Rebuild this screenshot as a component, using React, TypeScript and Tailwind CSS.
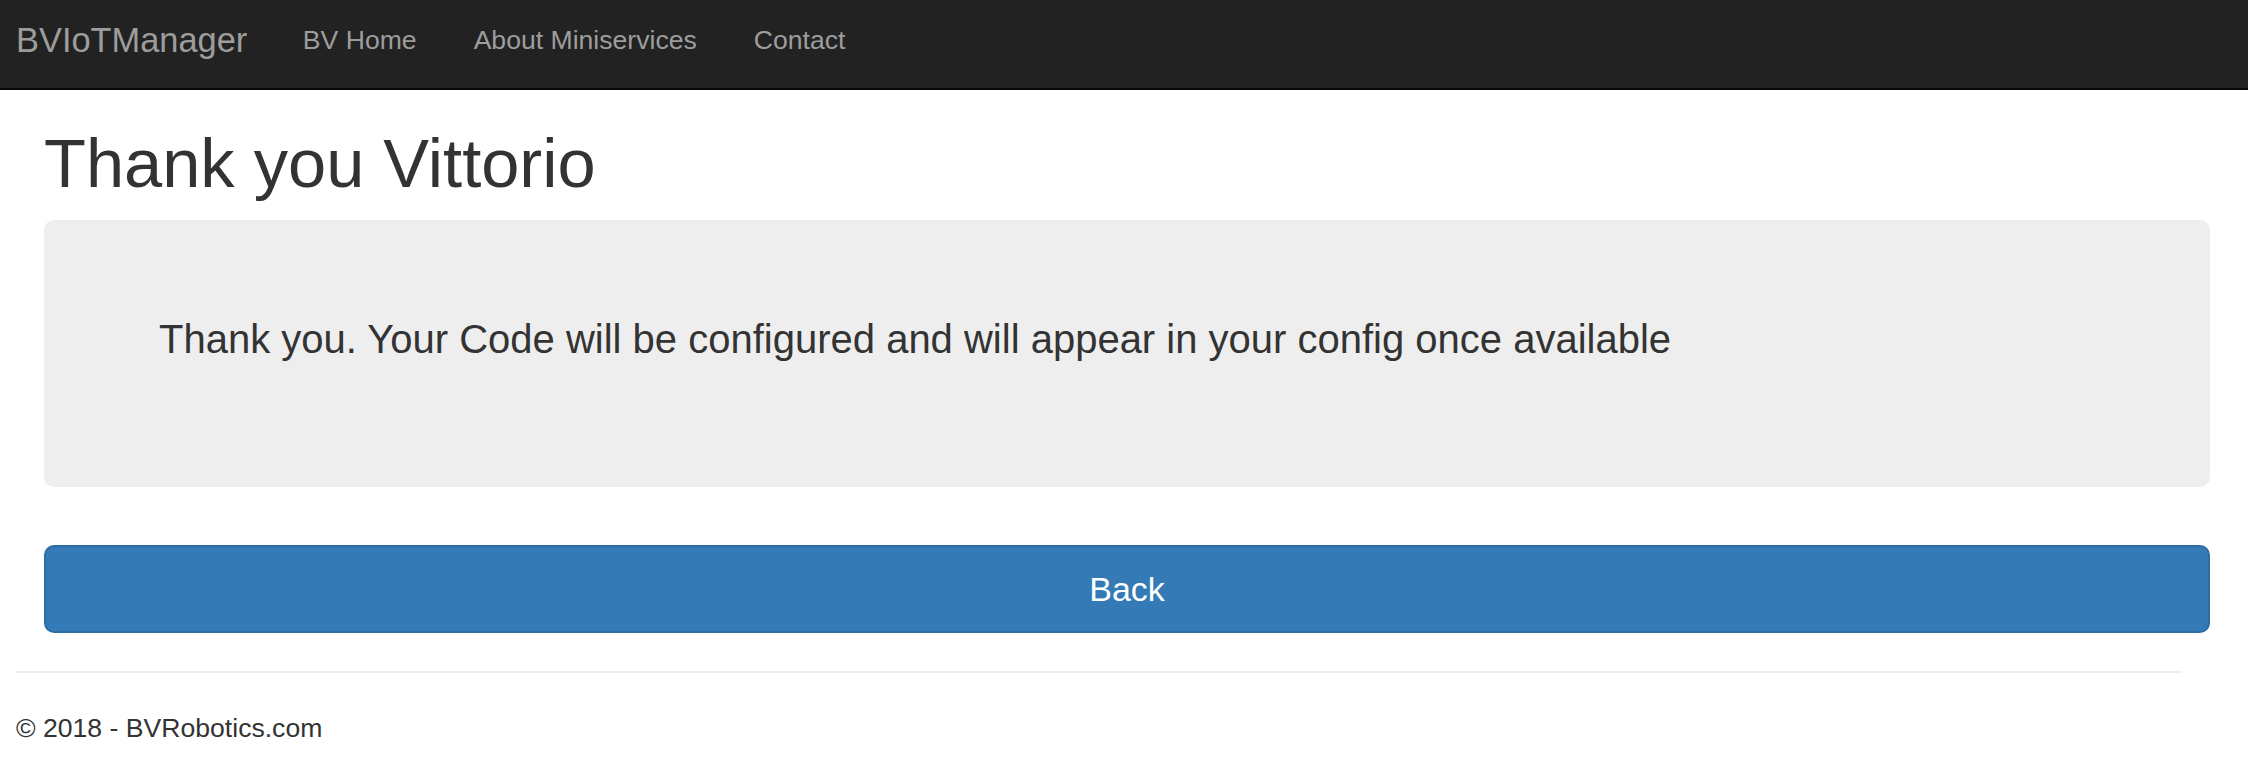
import React from "react";

export default function App() {
  return (
    <div className="min-h-screen bg-white font-['Liberation_Sans',Arial,sans-serif] text-[#333333]">
      <nav className="box-border flex h-[90px] items-start border-b-2 border-[#080808] bg-[#222222] pl-[16px] pt-[21px]">
        <a className="pr-[55.5px] text-[34.4px] leading-[38px] text-[#9d9d9d]">BVIoTManager</a>
        <ul className="flex gap-[57px]">
          <li className="text-[26.6px] leading-[38px] text-[#9d9d9d]">BV Home</li>
          <li className="text-[26.6px] leading-[38px] text-[#9d9d9d]">About Miniservices</li>
          <li className="text-[26.6px] leading-[38px] text-[#9d9d9d]">Contact</li>
        </ul>
      </nav>
      <div className="pl-[16px] pr-[66px]">
        <div className="ml-[28px] -mr-[28px]">
          <h1 className="mb-[19px] mt-[36px] text-[68.6px] font-normal leading-[75px] text-[#333333]">
            Thank you Vittorio
          </h1>
          <div className="box-border h-[267px] rounded-[10px] bg-[#eeeeee] pl-[115px] pt-[91px]">
            <p className="text-[40px] leading-[56px] text-[#333333]">
              Thank you. Your Code will be configured and will appear in your config once available
            </p>
          </div>
          <button className="mt-[58px] box-border flex h-[88px] w-full items-center justify-center rounded-[10px] border-2 border-[#2e6da4] bg-[#337ab7] text-[34px] leading-[45px] text-white">
            Back
          </button>
        </div>
        <div className="mt-[38px] h-[2px] bg-[#eeeeee]" />
        <footer className="pt-[36px] text-[26.6px] leading-[38px] text-[#333333]">
          © 2018 - BVRobotics.com
        </footer>
      </div>
    </div>
  );
}
